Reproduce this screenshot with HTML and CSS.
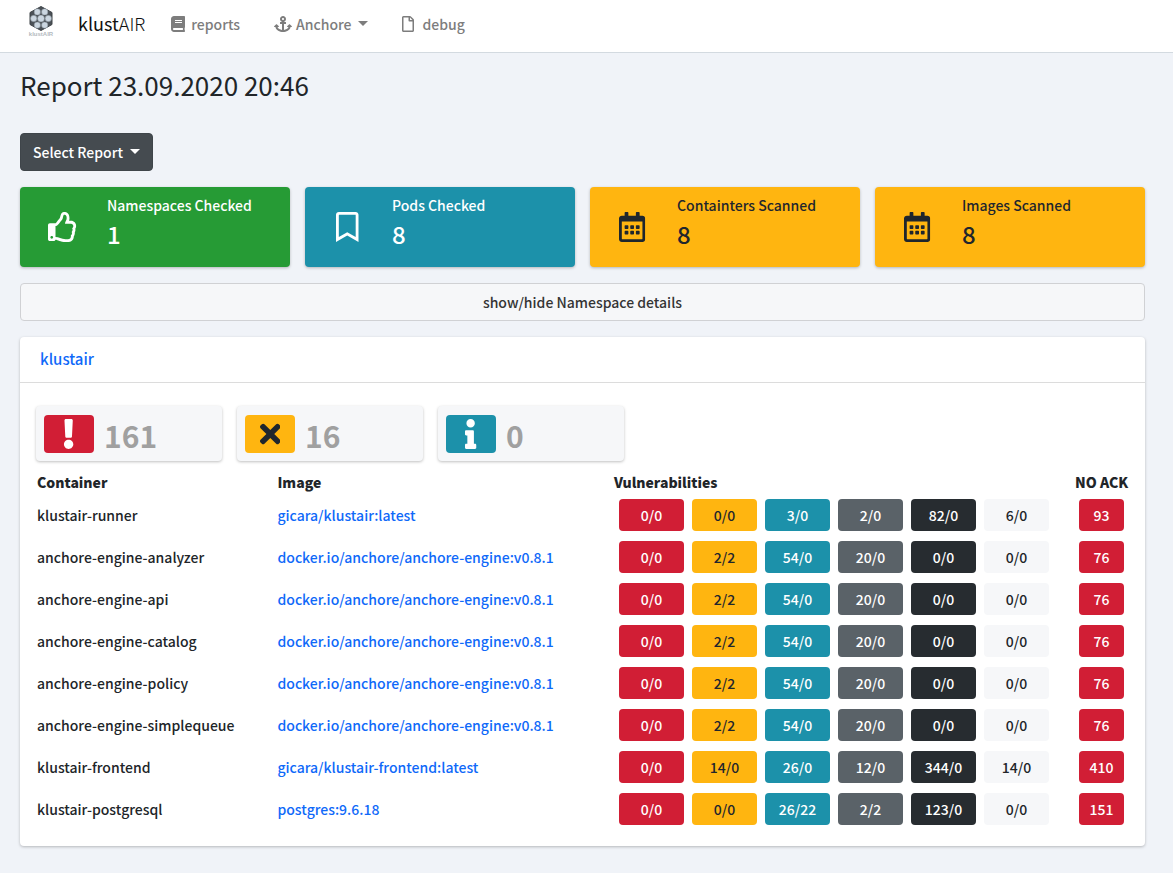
FILE: index.html
```html
<!DOCTYPE html>
<html lang="en">
<head>
<meta charset="utf-8">
<meta name="viewport" content="width=device-width, initial-scale=1">
<title>klustAIR</title>
<link rel="stylesheet" href="styles.css">
</head>
<body>
<svg class="sprite" aria-hidden="true">
  <symbol id="calendar" viewBox="0 0 448 512"><path d="M148 288h-40c-6.600 0-12-5.400-12-12v-40c0-6.600 5.400-12 12-12h40c6.600 0 12 5.400 12 12v40c0 6.600-5.400 12-12 12zm108-12v-40c0-6.600-5.400-12-12-12h-40c-6.600 0-12 5.400-12 12v40c0 6.600 5.400 12 12 12h40c6.600 0 12-5.400 12-12zm96 0v-40c0-6.600-5.400-12-12-12h-40c-6.600 0-12 5.400-12 12v40c0 6.600 5.400 12 12 12h40c6.600 0 12-5.400 12-12zm-96 96v-40c0-6.600-5.400-12-12-12h-40c-6.600 0-12 5.400-12 12v40c0 6.600 5.400 12 12 12h40c6.600 0 12-5.400 12-12zm-96 0v-40c0-6.600-5.400-12-12-12h-40c-6.600 0-12 5.400-12 12v40c0 6.600 5.400 12 12 12h40c6.600 0 12-5.400 12-12zm192 0v-40c0-6.600-5.400-12-12-12h-40c-6.600 0-12 5.400-12 12v40c0 6.600 5.400 12 12 12h40c6.600 0 12-5.400 12-12zm96-260v352c0 26.500-21.500 48-48 48H48c-26.500 0-48-21.500-48-48V112c0-26.500 21.500-48 48-48h48V12c0-6.600 5.400-12 12-12h40c6.600 0 12 5.400 12 12v52h128V12c0-6.600 5.400-12 12-12h40c6.600 0 12 5.400 12 12v52h48c26.500 0 48 21.500 48 48zm-48 346V160H48v298c0 3.300 2.700 6 6 6h340c3.300 0 6-2.700 6-6z"/></symbol>
</svg>

<nav class="navbar">
  <a class="logo" href="#" aria-label="klustAIR home">
    <svg viewBox="0 0 28 32" width="28" height="32">
      <path d="M14 .5 25 6.500V18.500L14 24.500 3 18.500V6.500Z" fill="#4b5157" stroke="#3d4247" stroke-linejoin="round"/>
      <g fill="#cbd6e0" stroke="#7b848c" stroke-width=".5">
        <circle cx="14" cy="12.500" r="3.500"/>
        <circle cx="10.300" cy="5.900" r="3.200"/><circle cx="17.700" cy="5.900" r="3.200"/>
        <circle cx="6.700" cy="12.500" r="3.200"/><circle cx="21.300" cy="12.500" r="3.200"/>
        <circle cx="10.300" cy="19.100" r="3.200"/><circle cx="17.700" cy="19.100" r="3.200"/>
      </g>
      <text x="14" y="30" text-anchor="middle" class="logo-text">klustAIR</text>
    </svg>
  </a>
  <a class="brand" href="#">klust<span class="brand-light">AIR</span></a>
  <a class="nav-link nav-reports" href="#">
    <svg class="icon" viewBox="0 0 448 512"><path d="M448 360V24c0-13.300-10.700-24-24-24H96C43 0 0 43 0 96v320c0 53 43 96 96 96h328c13.300 0 24-10.700 24-24v-16c0-7.500-3.500-14.300-8.900-18.700-4.200-15.400-4.200-59.300 0-74.700 5.400-4.300 8.900-11.100 8.900-18.600zM128 134c0-3.300 2.700-6 6-6h212c3.300 0 6 2.700 6 6v20c0 3.300-2.700 6-6 6H134c-3.300 0-6-2.700-6-6v-20zm0 64c0-3.300 2.700-6 6-6h212c3.300 0 6 2.700 6 6v20c0 3.300-2.700 6-6 6H134c-3.300 0-6-2.700-6-6v-20zm253.400 250H96c-17.700 0-32-14.300-32-32 0-17.600 14.400-32 32-32h285.400c-1.900 17.100-1.900 46.900 0 64z"/></svg>
    reports</a>
  <button class="nav-link nav-anchore" type="button">
    <svg class="icon" viewBox="0 0 576 512"><path d="M12.971 352h32.394C67.172 454.735 181.944 512 288 512c106.229 0 220.853-57.380 242.635-160h32.394c10.691 0 16.045-12.926 8.485-20.485l-67.029-67.029c-4.686-4.686-12.284-4.686-16.971 0l-67.029 67.029c-7.560 7.560-2.206 20.485 8.485 20.485h35.146c-20.290 54.317-84.963 86.588-144.117 94.015V256h52c6.627 0 12-5.373 12-12v-40c0-6.627-5.373-12-12-12h-52v-5.470c37.281-13.226 63.995-48.858 63.997-90.738C383.998 42.740 341.271-.260 288.217.001c-53.003.261-95.966 43.254-96.216 96.214-.199 41.710 26.315 77.124 63.999 90.315V192h-52c-6.627 0-12 5.373-12 12v40c0 6.627 5.373 12 12 12h52v190.015c-58.936-7.399-123.820-39.679-144.117-94.015h35.146c10.691 0 16.045-12.926 8.485-20.485l-67.029-67.029c-4.686-4.686-12.284-4.686-16.971 0L4.485 331.515C-3.074 339.074 2.280 352 12.971 352zM288 64c17.645 0 32 14.355 32 32s-14.355 32-32 32-32-14.355-32-32 14.355-32 32-32z"/></svg>
    Anchore<span class="caret"></span></button>
  <a class="nav-link nav-debug" href="#">
    <svg class="icon" viewBox="0 0 384 512"><path d="M369.900 97.900L286 14C277 5 264.800-.100 252.100-.100H48C21.500 0 0 21.500 0 48v416c0 26.500 21.500 48 48 48h288c26.500 0 48-21.500 48-48V131.900c0-12.700-5.100-25-14.100-34zM332.100 128H256V51.900l76.100 76.100zM48 464V48h160v104c0 13.300 10.700 24 24 24h104v288H48z"/></svg>
    debug</a>
</nav>

<main class="page">
  <h1 class="title">Report 23.09.2020 20:46</h1>
  <button class="select-report" type="button">Select Report<span class="caret"></span></button>

  <section class="stats">
    <article class="stat success">
      <div class="stat-icon"><svg class="icon" viewBox="0 0 512 512"><path d="M466.270 286.690C475.040 271.840 480 256 480 236.850c0-44.015-37.218-85.580-85.820-85.580H357.700c4.920-12.810 8.850-28.130 8.850-46.540C366.550 31.936 328.860 0 271.280 0c-61.607 0-58.093 94.933-71.760 108.600-22.747 22.747-49.615 66.447-68.760 83.400H32c-17.673 0-32 14.327-32 32v240c0 17.673 14.327 32 32 32h64c14.893 0 27.408-10.174 30.978-23.950 44.509 1.001 75.060 39.940 177.802 39.940 7.220 0 15.220.010 22.220.010 77.117 0 111.986-39.423 112.940-95.330 13.319-18.425 20.299-43.122 17.340-66.990 9.854-18.452 13.664-40.343 8.990-62.990zm-61.750 53.830c12.560 21.130 1.260 49.410-13.940 57.570 7.700 48.780-17.608 65.900-53.120 65.900h-37.820c-71.639 0-118.029-37.820-171.640-37.820V240h10.920c28.360 0 67.980-70.890 94.540-97.460 28.360-28.360 18.910-75.630 37.820-94.540 47.270 0 47.270 32.980 47.270 56.730 0 39.170-28.360 56.720-28.360 94.540h103.990c21.110 0 37.730 18.910 37.820 37.820.090 18.900-12.820 37.810-22.270 37.810 13.489 14.555 16.371 45.236-5.210 65.620zM88 432c0 13.255-10.745 24-24 24s-24-10.745-24-24 10.745-24 24-24 24 10.745 24 24z"/></svg></div>
      <div><h2 class="stat-label">Namespaces Checked</h2><p class="stat-value">1</p></div>
    </article>
    <article class="stat info">
      <div class="stat-icon"><svg class="icon" viewBox="0 0 384 512"><path d="M336 0H48C21.490 0 0 21.490 0 48v464l192-112 192 112V48c0-26.510-21.490-48-48-48zm0 428.430l-144-84-144 84V54a6 6 0 0 1 6-6h276c3.314 0 6 2.683 6 5.996V428.430z"/></svg></div>
      <div><h2 class="stat-label">Pods Checked</h2><p class="stat-value">8</p></div>
    </article>
    <article class="stat warning">
      <div class="stat-icon"><svg class="icon" viewBox="0 0 448 512"><use href="#calendar"/></svg></div>
      <div><h2 class="stat-label">Containters Scanned</h2><p class="stat-value">8</p></div>
    </article>
    <article class="stat warning">
      <div class="stat-icon"><svg class="icon" viewBox="0 0 448 512"><use href="#calendar"/></svg></div>
      <div><h2 class="stat-label">Images Scanned</h2><p class="stat-value">8</p></div>
    </article>
  </section>

  <button class="toggle" type="button">show/hide Namespace details</button>

  <section class="card">
    <header class="card-header"><a href="#">klustair</a></header>
    <div class="card-body">
      <div class="counts">
        <div class="count"><span class="count-icon danger"><svg class="icon" viewBox="0 0 192 512"><path d="M176 432c0 44.112-35.888 80-80 80s-80-35.888-80-80 35.888-80 80-80 80 35.888 80 80zM25.260 25.199l13.600 272C39.499 309.972 50.041 320 62.830 320h66.340c12.789 0 23.331-10.028 23.970-22.801l13.600-272C167.425 11.490 156.496 0 142.770 0H49.230C35.504 0 24.575 11.490 25.260 25.199z"/></svg></span><strong>161</strong></div>
        <div class="count"><span class="count-icon warning"><svg class="icon" viewBox="0 0 352 512"><path d="M242.720 256l100.070-100.070c12.280-12.280 12.280-32.190 0-44.480l-22.240-22.240c-12.280-12.280-32.190-12.280-44.480 0L176 189.280 75.930 89.210c-12.280-12.280-32.190-12.280-44.480 0L9.210 111.450c-12.280 12.280-12.280 32.190 0 44.480L109.280 256 9.210 356.070c-12.280 12.280-12.280 32.190 0 44.480l22.240 22.240c12.280 12.280 32.200 12.280 44.480 0L176 322.720l100.070 100.070c12.280 12.280 32.200 12.280 44.480 0l22.240-22.240c12.280-12.280 12.280-32.190 0-44.480L242.720 256z"/></svg></span><strong>16</strong></div>
        <div class="count"><span class="count-icon info"><svg class="icon" viewBox="0 0 192 512"><path d="M20 424.229h20V279.771H20c-11.046 0-20-8.954-20-20V212c0-11.046 8.954-20 20-20h112c11.046 0 20 8.954 20 20v212.229h20c11.046 0 20 8.954 20 20V492c0 11.046-8.954 20-20 20H20c-11.046 0-20-8.954-20-20v-47.771c0-11.046 8.954-20 20-20zM96 0C56.235 0 24 32.235 24 72s32.235 72 72 72 72-32.235 72-72S135.764 0 96 0z"/></svg></span><strong>0</strong></div>
      </div>

      <table class="report">
        <colgroup><col class="col-container"><col><col class="col-vulns"><col class="col-ack"></colgroup>
        <thead><tr><th>Container</th><th>Image</th><th>Vulnerabilities</th><th>NO ACK</th></tr></thead>
        <tbody>
          <tr><td>klustair-runner</td><td><a href="#">gicara/klustair:latest</a></td><td><div class="badges"><span class="badge danger">0/0</span><span class="badge warning">0/0</span><span class="badge info">3/0</span><span class="badge secondary">2/0</span><span class="badge dark">82/0</span><span class="badge light">6/0</span></div></td><td><span class="badge ack danger">93</span></td></tr>
          <tr><td>anchore-engine-analyzer</td><td><a href="#">docker.io/anchore/anchore-engine:v0.8.1</a></td><td><div class="badges"><span class="badge danger">0/0</span><span class="badge warning">2/2</span><span class="badge info">54/0</span><span class="badge secondary">20/0</span><span class="badge dark">0/0</span><span class="badge light">0/0</span></div></td><td><span class="badge ack danger">76</span></td></tr>
          <tr><td>anchore-engine-api</td><td><a href="#">docker.io/anchore/anchore-engine:v0.8.1</a></td><td><div class="badges"><span class="badge danger">0/0</span><span class="badge warning">2/2</span><span class="badge info">54/0</span><span class="badge secondary">20/0</span><span class="badge dark">0/0</span><span class="badge light">0/0</span></div></td><td><span class="badge ack danger">76</span></td></tr>
          <tr><td>anchore-engine-catalog</td><td><a href="#">docker.io/anchore/anchore-engine:v0.8.1</a></td><td><div class="badges"><span class="badge danger">0/0</span><span class="badge warning">2/2</span><span class="badge info">54/0</span><span class="badge secondary">20/0</span><span class="badge dark">0/0</span><span class="badge light">0/0</span></div></td><td><span class="badge ack danger">76</span></td></tr>
          <tr><td>anchore-engine-policy</td><td><a href="#">docker.io/anchore/anchore-engine:v0.8.1</a></td><td><div class="badges"><span class="badge danger">0/0</span><span class="badge warning">2/2</span><span class="badge info">54/0</span><span class="badge secondary">20/0</span><span class="badge dark">0/0</span><span class="badge light">0/0</span></div></td><td><span class="badge ack danger">76</span></td></tr>
          <tr><td>anchore-engine-simplequeue</td><td><a href="#">docker.io/anchore/anchore-engine:v0.8.1</a></td><td><div class="badges"><span class="badge danger">0/0</span><span class="badge warning">2/2</span><span class="badge info">54/0</span><span class="badge secondary">20/0</span><span class="badge dark">0/0</span><span class="badge light">0/0</span></div></td><td><span class="badge ack danger">76</span></td></tr>
          <tr><td>klustair-frontend</td><td><a href="#">gicara/klustair-frontend:latest</a></td><td><div class="badges"><span class="badge danger">0/0</span><span class="badge warning">14/0</span><span class="badge info">26/0</span><span class="badge secondary">12/0</span><span class="badge dark">344/0</span><span class="badge light">14/0</span></div></td><td><span class="badge ack danger">410</span></td></tr>
          <tr><td>klustair-postgresql</td><td><a href="#">postgres:9.6.18</a></td><td><div class="badges"><span class="badge danger">0/0</span><span class="badge warning">0/0</span><span class="badge info">26/22</span><span class="badge secondary">2/2</span><span class="badge dark">123/0</span><span class="badge light">0/0</span></div></td><td><span class="badge ack danger">151</span></td></tr>
        </tbody>
      </table>
    </div>
  </section>
</main>
</body>
</html>
```

FILE: styles.css
```css
* { box-sizing: border-box; }

body {
  margin: 0;
  background: #f0f3f8;
  color: #212529;
  font-family: "Noto Sans CJK SC", "Noto Sans", sans-serif;
  font-size: 14px;
  font-weight: 500;
  line-height: 24px;
}

h1, h2, p { margin: 0; font-weight: 500; }
a { color: #0f69f9; text-decoration: none; }
button { font: inherit; cursor: pointer; }
.sprite { display: none; }
.icon { display: block; height: 16px; fill: currentColor; }

.caret {
  margin-bottom: 2px;
  border-top: 5px solid;
  border-left: 5px solid transparent;
  border-right: 5px solid transparent;
}

.navbar {
  display: flex;
  align-items: center;
  height: 53px;
  padding: 0 27px 4px;
  background: #fff;
  border-bottom: 1px solid #d3dae0;
}
.logo { display: flex; margin-right: 23px; padding-bottom: 4px; }
.logo-text { font: 700 6px "Liberation Sans", sans-serif; fill: #b4bac0; }
.brand { margin-right: 26px; padding-bottom: 2px; color: #111; font-size: 18px; font-weight: 400; }
.brand-light { font-weight: 300; }
.nav-link {
  display: flex;
  align-items: center;
  gap: 6px;
  padding: 0;
  border: 0;
  background: none;
  color: #7d7d7d;
}
.nav-anchore { margin: 0 34px; gap: 4px; }
.nav-anchore .caret { margin-left: 3px; }
.nav-debug { gap: 8px; }

.page { padding: 14px 28px 26px 20px; }
.title { margin-bottom: 31px; font-size: 26px; font-weight: 400; line-height: 35px; }

.select-report {
  display: flex;
  align-items: center;
  gap: 7px;
  height: 38px;
  padding: 0 12px;
  border: 1px solid #3f454a;
  border-radius: 4px;
  background: #454b50;
  color: #fff;
}

.stats {
  display: grid;
  grid-template-columns: repeat(4, 1fr);
  gap: 15px;
  margin: 16px 0;
}
.stat {
  display: flex;
  height: 80px;
  padding-top: 6px;
  border-radius: 4px;
  box-shadow: 0 1px 3px rgba(0, 0, 0, .25);
}
.stat-icon {
  display: flex;
  justify-content: center;
  width: 85px;
  margin-right: 2px;
  padding-top: 19px;
}
.stat-icon .icon, .count-icon .icon { height: 30px; }
.stat-label { font-size: 14px; line-height: 24px; }
.stat-value { font-size: 24px; line-height: 34px; }

.success { background: #269b35; color: #fff; }
.info { background: #1c91aa; color: #fff; }
.warning { background: #ffb510; color: #1f262d; }
.danger { background: #d11e35; color: #fff; }
.secondary { background: #5a6268; color: #fff; }
.dark { background: #272c30; color: #fff; }
.light { background: #f6f7f9; color: #212529; }

.toggle {
  display: block;
  width: 100%;
  height: 38px;
  margin-bottom: 16px;
  border: 1px solid #d0d1d4;
  border-radius: 4px;
  background: #f6f7f9;
  color: #343434;
}

.card {
  border-radius: 4px;
  background: #fff;
  box-shadow: 0 1px 3px rgba(0, 0, 0, .25);
}
.card-header { padding: 10px 20px 11px; border-bottom: 1px solid #dcdcdc; font-size: 15px; }
.card-body { padding: 23px 16px 16px; }

.counts { display: flex; gap: 15px; margin-bottom: 9px; }
.count {
  display: flex;
  align-items: center;
  gap: 10px;
  width: 186px;
  height: 55px;
  padding: 0 8px;
  border-radius: 4px;
  background: #f6f7f9;
  box-shadow: 0 1px 3px rgba(0, 0, 0, .25);
}
.count-icon {
  display: flex;
  align-items: center;
  justify-content: center;
  width: 50px;
  height: 38px;
  border-radius: 4px;
}
.count strong { padding-top: 2px; color: #a0a0a0; font-size: 30px; line-height: 36px; }

.report { width: 100%; table-layout: fixed; border-collapse: collapse; }
.col-container { width: 22%; }
.col-vulns { width: 461px; }
.col-ack { width: 55px; }
.report th { padding: 0 1px; text-align: left; font-weight: 900; white-space: nowrap; }
.report td { height: 42px; padding: 0 1px; }
.badges { display: flex; gap: 8px; padding-left: 5px; }
.badge {
  display: block;
  width: 65px;
  border-radius: 4px;
  text-align: center;
  line-height: 32px;
}
.ack { width: 45px; margin: 0 4px; }
```
